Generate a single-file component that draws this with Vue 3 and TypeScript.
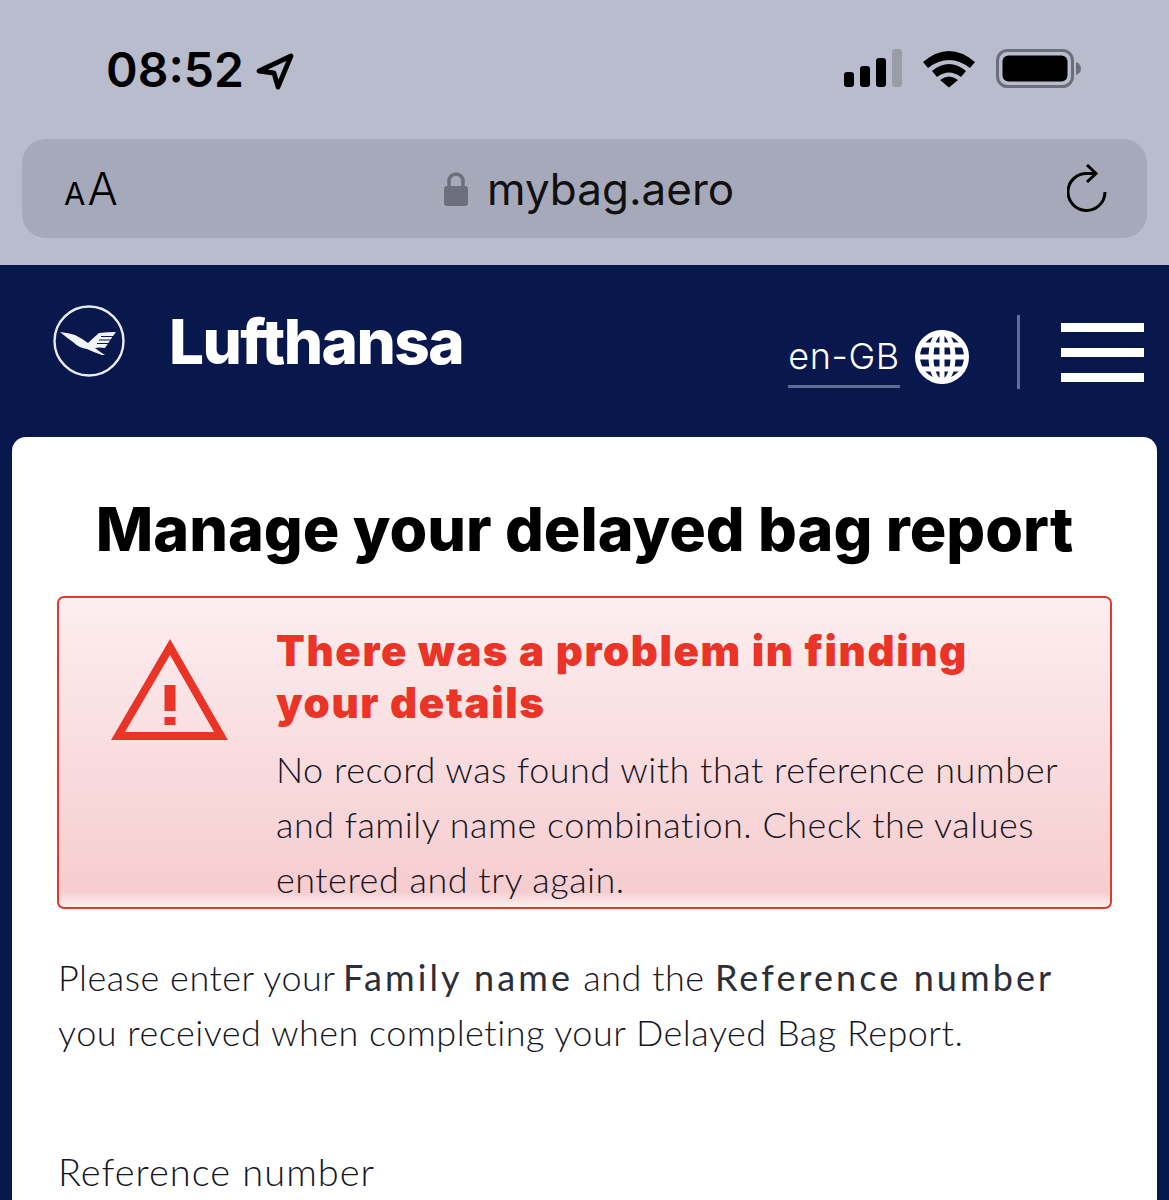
<script setup lang="ts">
const intro = 'Please enter your'
</script>

<template>
  <div class="page">
    <div class="chrome">
      <div class="status">
        <div class="clock">
          <span>08:52</span>
          <svg width="38" height="38" viewBox="0 0 38 38" class="arrow">
            <path d="M3 19 L35 4 L22 35 L18 21 Z" fill="none" stroke="#000" stroke-width="4.8" stroke-linejoin="round" />
          </svg>
        </div>
        <div class="indicators">
          <svg width="62" height="38" viewBox="0 0 62 38">
            <rect x="1" y="23" width="10" height="15" rx="3" fill="#000" />
            <rect x="17" y="17" width="10" height="21" rx="3" fill="#000" />
            <rect x="33" y="9" width="10" height="29" rx="3" fill="#000" />
            <rect x="49" y="0" width="10" height="38" rx="3" fill="#9a9ca8" />
          </svg>
          <svg width="54" height="40" viewBox="0 0 54 40" class="wifi">
            <path d="M1 14 Q27 -8 53 14 L48 20 Q27 4 6 20 Z" fill="#000" />
            <path d="M10 23 Q27 9 44 23 L39 29 Q27 20 15 29 Z" fill="#000" />
            <path d="M18 32 Q27 25 36 32 L27 39.500 Z" fill="#000" />
          </svg>
          <svg width="86" height="40" viewBox="0 0 86 40">
            <rect x="1.500" y="1.500" width="75" height="36" rx="10" fill="none" stroke="#6c6e7b" stroke-width="3" />
            <rect x="6.500" y="6.500" width="65" height="26" rx="6" fill="#000" />
            <path d="M80 13 Q85 15 85 19.500 Q85 24 80 26 Z" fill="#6c6e7b" />
          </svg>
        </div>
      </div>
      <div class="urlbar">
        <div class="textsize"><span class="small">A</span><span class="large">A</span></div>
        <div class="address">
          <svg width="26" height="36" viewBox="0 0 26 36">
            <path d="M6 16 V10 A7 7 0 0 1 20 10 V16" fill="none" stroke="#6d6f7c" stroke-width="3.500" />
            <rect x="1" y="15" width="24" height="20" rx="3" fill="#6d6f7c" />
          </svg>
          <span>mybag.aero</span>
        </div>
        <svg width="44" height="52" viewBox="0 0 44 52" class="reload">
          <path d="M38 28 A18.500 18.500 0 1 1 21 9.500 L28 9.500" fill="none" stroke="#000" stroke-width="3" />
          <path d="M20 1 L29 9.500 L20 18" fill="none" stroke="#000" stroke-width="3" />
        </svg>
      </div>
    </div>

    <div class="site">
      <header class="nav">
        <div class="brand">
          <svg width="72" height="72" viewBox="0 0 72 72">
            <circle cx="36" cy="36" r="34.500" fill="none" stroke="#e8eaf2" stroke-width="2.400" />
            <path d="M7 27 Q16 28 22 30 Q30 34 35 38 Q40 33 46 28 Q54 27 63 27 L60 31 L52 43 Q46 42 42 43 Q47 47 52 50 L49 50 Q40 47 34 44 Q26 43 20 37 Q14 33 7 27 Z" fill="#f2f3f7" />
            <path d="M48 31.500 H62 M46 35 H60 M44 38.500 H58" stroke="#08174c" stroke-width="1.100" />
          </svg>
          <span class="wordmark">Lufthansa</span>
        </div>
        <div class="nav-right">
          <span class="locale">en-GB</span>
          <svg width="54" height="54" viewBox="0 0 54 54" class="globe">
            <circle cx="27" cy="27" r="24.500" fill="none" stroke="#fff" stroke-width="5" />
            <ellipse cx="27" cy="27" rx="11" ry="24.500" fill="none" stroke="#fff" stroke-width="5" />
            <path d="M27 2 V52 M2.500 27 H51.500 M6 15 H48 M6 39 H48" stroke="#fff" stroke-width="5" />
          </svg>
          <i class="divider"></i>
          <div class="burger"><i></i><i></i><i></i></div>
        </div>
      </header>

      <main class="card">
        <h1>Manage your delayed bag report</h1>
        <section class="alert">
          <svg width="118" height="102" viewBox="0 0 118 102" class="warn">
            <path d="M59 8 L110 97 H7 Z" fill="none" stroke="#e93427" stroke-width="8" />
            <rect x="53.500" y="46" width="11" height="26" fill="#e93427" />
            <rect x="53.500" y="78" width="11" height="8" fill="#e93427" />
          </svg>
          <div class="alert-body">
            <h2>There was a problem in finding<br />your details</h2>
            <p>No record was found with that reference number<br />and family name combination. Check the values<br />entered and try again.</p>
          </div>
        </section>
        <p class="intro">
          {{ intro }} <strong>Family name</strong> and the <strong>Reference number</strong><br />
          you received when completing your Delayed Bag Report.
        </p>
        <label class="field-label">Reference number</label>
      </main>
    </div>
  </div>
</template>

<style scoped>
.page {
  height: 1200px;
  overflow: hidden;
  display: flex;
  flex-direction: column;
  font-family: Lato, "Liberation Sans", sans-serif;
}
.chrome {
  height: 265px;
  flex: none;
  background: #b8bccc;
  box-sizing: border-box;
  padding: 0 22px;
}
.status {
  height: 139px;
  display: flex;
  justify-content: space-between;
  align-items: flex-start;
}
.clock {
  margin: 41px 0 0 84px;
  display: flex;
  align-items: center;
  gap: 12px;
  font: 600 48px/58px Inter, sans-serif;
  color: #000;
}
.arrow {
  margin-top: 1px;
}
.indicators {
  display: flex;
  align-items: flex-start;
  margin: 49px 65px 0 0;
  gap: 18px;
}
.wifi {
  margin: -1px 2px 0 -1px;
}
.urlbar {
  height: 99px;
  background: #a6a9ba;
  border-radius: 24px;
  display: flex;
  align-items: center;
  justify-content: space-between;
  padding: 0 36px 0 42px;
  position: relative;
}
.textsize {
  color: #000;
  font-family: Inter, sans-serif;
  line-height: 1;
  display: flex;
  align-items: baseline;
}
.small {
  font-size: 31px;
  margin-right: 2px;
}
.large {
  font-size: 45px;
  font-weight: 300;
}
.reload {
  margin-top: 2px;
}
.address {
  position: absolute;
  left: 421px;
  top: 24px;
  display: flex;
  align-items: center;
  gap: 18px;
  font: 400 44px/52px Inter, sans-serif;
  color: #111;
}
.site {
  flex: 1;
  background: #08174c;
  display: flex;
  flex-direction: column;
  padding: 0 12px;
}
.nav {
  height: 172px;
  flex: none;
  display: flex;
  justify-content: space-between;
  align-items: flex-start;
  padding-right: 13px;
}
.brand {
  display: flex;
  align-items: center;
  gap: 44px;
  margin: 39px 0 0 41px;
  color: #fff;
}
.wordmark {
  font: 800 62px/72px Inter, "Liberation Sans", sans-serif;
  letter-spacing: -1.600px;
  margin-top: 2px;
}
.nav-right {
  display: flex;
  align-items: flex-start;
  margin-top: 50px;
  color: #fff;
}
.locale {
  margin-top: 12px;
  width: 112px;
  height: 61px;
  box-sizing: border-box;
  padding-top: 6px;
  font: 300 36px/46px Inter, sans-serif;
  border-bottom: 3px solid #5f6c94;
  letter-spacing: 0.6px;
  text-align: center;
  white-space: nowrap;
}
.globe {
  margin: 15px 0 0 15px;
}
.divider {
  width: 3px;
  height: 74px;
  background: #5f6c94;
  margin-left: 48px;
}
.burger {
  margin: 8px 0 0 41px;
  width: 83px;
  display: flex;
  flex-direction: column;
  gap: 16px;
}
.burger i {
  height: 9px;
  background: #fff;
}
.card {
  flex: 1;
  background: #fff;
  border-radius: 14px 14px 0 0;
  padding: 0 45px;
  color: #14161f;
}
h1 {
  margin: 54px 0 0;
  font: 800 61px/76px Inter, sans-serif;
  color: #000;
  text-align: center;
  white-space: nowrap;
}
.alert {
  margin-top: 29px;
  height: 313px;
  box-sizing: border-box;
  border: 2.500px solid #e03a30;
  border-radius: 7px;
  background: linear-gradient(#fdeeef 0, #f6cdd0 95%, #fdf0f0 100%);
  display: flex;
  padding-left: 52px;
  overflow: hidden;
}
.warn {
  flex: none;
  margin-top: 41px;
}
.alert-body {
  margin-left: 47px;
}
h2 {
  margin: 27px 0 0;
  font: 900 42px/52px Inter, sans-serif;
  letter-spacing: 1.600px;
  color: #e93427;
  white-space: nowrap;
}
.alert-body p {
  margin: 13px 0 0;
  font-size: 36px;
  font-weight: 300;
  line-height: 55px;
  letter-spacing: 0.5px;
  white-space: nowrap;
}
.intro {
  margin: 41px 0 0 1px;
  font-size: 36px;
  font-weight: 300;
  line-height: 55px;
  letter-spacing: 0.5px;
  white-space: nowrap;
}
.intro strong {
  font-weight: 400;
  letter-spacing: 3.100px;
  color: #2c2e38;
}
.intro strong:first-of-type {
  margin-left: -2px;
}
.field-label {
  display: block;
  margin: 84px 0 0 1px;
  font-size: 38px;
  font-weight: 300;
  line-height: 55px;
  letter-spacing: 1px;
}
</style>
